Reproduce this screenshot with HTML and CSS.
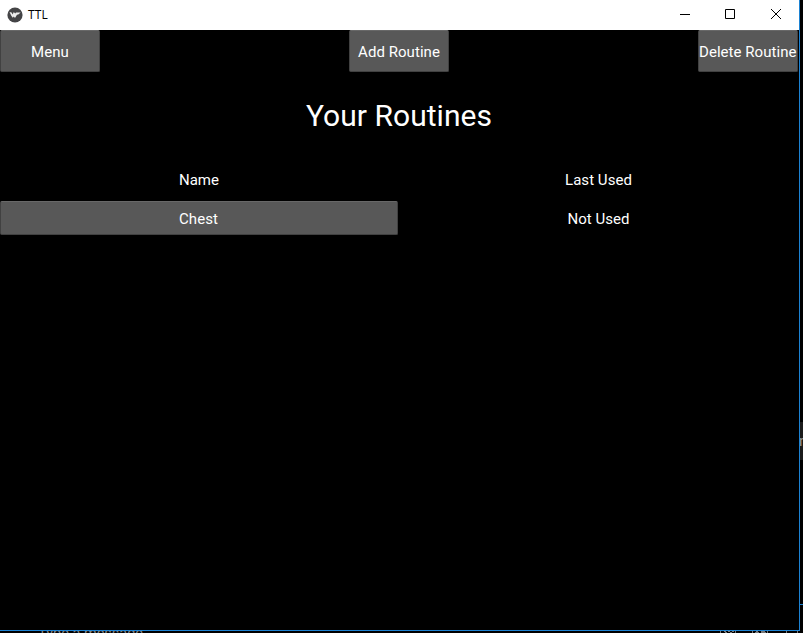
FILE: index.html
```html
<!DOCTYPE html>
<html lang="en">
<head>
<meta charset="utf-8">
<title>TTL</title>
<link rel="stylesheet" href="styles.css">
</head>
<body>
<div class="desktop">
  <main class="window">
    <header class="titlebar">
      <svg class="logo" viewBox="0 0 16 16"><circle cx="8" cy="8" r="7.6" fill="#444446"/><path d="M2.500 5 4.600 5.500l1 2L6.800 5l1.400 1.500.8-1.100 4.700.1-2.400 2-1.300.3-2 3.200-1.200-1.500-1 1.300-1.500-2z" fill="#ededed"/></svg>
      <span class="title">TTL</span>
      <svg class="control" viewBox="0 0 46 29"><path d="M17 14.500h10"/></svg>
      <svg class="control" viewBox="0 0 46 29"><path d="M16.500 9.500h9v9h-9z"/></svg>
      <svg class="control" viewBox="0 0 46 29"><path d="m16 9 10 10m0-10L16 19"/></svg>
    </header>
    <section class="client">
      <nav class="toolbar">
        <button class="button">Menu</button>
        <button class="button">Add Routine</button>
        <button class="button">Delete Routine</button>
      </nav>
      <h1 class="heading">Your Routines</h1>
      <div class="routines">
        <span class="cell head">Name</span>
        <span class="cell head">Last Used</span>
        <button class="button">Chest</button>
        <span class="cell">Not Used</span>
      </div>
    </section>
  </main>
  <aside class="side"><div class="bubble"><span>n</span></div><div class="rule"></div></aside>
  <footer class="composer">
    <span class="hint">Type a message</span>
    <svg class="tools" viewBox="0 0 90 2"><path d="M.5 0v2M15.500 0v2M32.500 0v2M47.500 0v2M66.500 0v2M77.500 0v2"/><path d="M4 .5h2m2 0h2m2 0h2M5 1.500h2m3 0h2M36 .5h2m3 0h4M35 1.500h4m2 0h5"/></svg>
  </footer>
</div>
</body>
</html>
```
FILE: styles.css
```css
* { box-sizing: border-box; }

body {
  margin: 0;
  background: #000;
  overflow: hidden;
}

.desktop {
  display: grid;
  grid-template: 631px 2px / 800px 3px;
  width: 803px;
  height: 633px;
  overflow: hidden;
  font-family: Roboto, "Liberation Sans", sans-serif;
}

.window {
  display: flex;
  flex-direction: column;
  border: solid #1c82d2;
  border-width: 0 1px 1px 0;
  background: #000;
}

.titlebar {
  display: flex;
  align-items: center;
  height: 30px;
  padding: 0 0 1px 7px;
  background: #fff;
}

.logo { width: 16px; height: 16px; }

.title {
  flex: 1;
  margin-left: 5px;
  color: #000;
  font: 12px "Open Sans", sans-serif;
  letter-spacing: 0.2px;
}

.control {
  width: 46px;
  height: 29px;
  fill: none;
  stroke: #000;
  stroke-width: 1;
}

.control:last-child { margin-right: -2px; }

.client {
  width: 798px;
  color: #fff;
  font-size: 15px;
  letter-spacing: 0.05px;
}

.toolbar {
  display: flex;
  justify-content: space-between;
}

.button {
  border: 1px solid #414141;
  border-top-color: #686868;
  border-radius: 2px;
  padding: 0;
  background: #585858;
  color: #fff;
  font: inherit;
  letter-spacing: inherit;
}

.toolbar .button {
  width: 100px;
  height: 42px;
  padding: 2px 0 0;
  white-space: nowrap;
}

.toolbar .button:last-child { padding-right: 2px; }

.heading {
  margin: 0;
  height: 88px;
  font-size: 30px;
  font-weight: 400;
  line-height: 88px;
  letter-spacing: 0.05px;
  text-align: center;
}

.routines {
  display: grid;
  grid-template: 41px 34px / 398px 401px;
}

.routines .button { padding: 2px 1px 0 0; }

.cell {
  line-height: 36px;
  text-align: center;
}

.head { line-height: 40px; }

.side {
  display: flex;
  flex-direction: column;
  padding-top: 422px;
}

.bubble {
  height: 38px;
  background: #1b1b1b;
  overflow: hidden;
  color: #999;
  font-size: 15px;
  line-height: 38px;
}

.bubble span { margin-left: -1px; }

.rule {
  height: 1px;
  margin-top: 144px;
  background: #1c82d2;
}

.composer {
  display: flex;
  grid-column: 1 / -1;
  height: 2px;
  padding-left: 38px;
  overflow: hidden;
}

.hint {
  flex: 0 0 682px;
  margin-top: -6px;
  color: #888;
  font-size: 14.5px;
  line-height: 17px;
}

.tools {
  flex: 0 0 90px;
  height: 2px;
  fill: none;
  stroke: #777;
}
```
